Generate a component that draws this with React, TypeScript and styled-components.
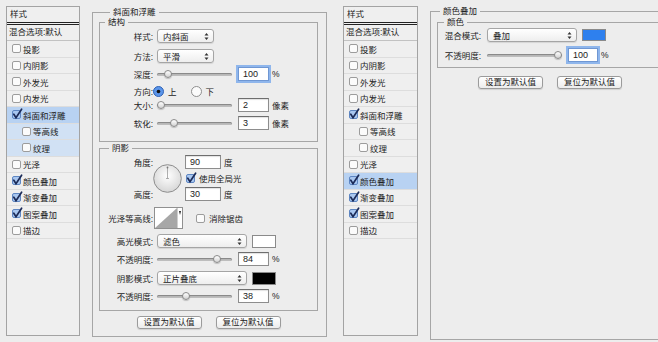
import styled, { createGlobalStyle } from 'styled-components';

const GlobalStyle = createGlobalStyle`
  html, body {
    margin: 0;
    padding: 0;
    background: #ededed;
  }
  body {
    font-family: "Liberation Sans", "Noto Sans CJK SC", sans-serif;
    font-size: 8.5px;
    color: #222;
  }
  * {
    box-sizing: border-box;
  }
`;

const Page = styled.div`
  display: flex;
  align-items: flex-start;
  width: 658px;
  height: 342px;
  padding: 6px 0 0 6px;
  overflow: hidden;
  background: #ededed;
`;

/* ---------- style list ---------- */

const ListPanel = styled.div<{ $ml?: number; $w: number }>`
  flex: none;
  width: ${p => p.$w}px;
  height: 330px;
  margin-left: ${p => p.$ml ?? 0}px;
  border: 1px solid #a3a3a3;
  background: #efefef;
`;

const ListHeader = styled.div`
  height: 18px;
  line-height: 15px;
  padding-left: 3px;
  border-bottom: 3px double #222;
`;

const BlendRow = styled.div`
  height: 16px;
  line-height: 15px;
  padding-left: 2px;
  border-bottom: 1px solid #c2c2c2;
  white-space: nowrap;
`;

const Item = styled.div<{ $bg?: string; $indent?: number }>`
  display: flex;
  align-items: center;
  gap: 2px;
  height: 16.5px;
  padding-left: ${p => 5 + (p.$indent ?? 0)}px;
  border-bottom: 1px solid #dddddd;
  background: ${p => p.$bg ?? 'transparent'};
  white-space: nowrap;
`;

/* ---------- group boxes ---------- */

const Column = styled.div<{ $ml: number }>`
  display: flex;
  flex: none;
  margin-left: ${p => p.$ml}px;
`;

const Group = styled.fieldset<{ $w?: number; $mt?: number; $pad?: string }>`
  flex: none;
  min-width: 0;
  width: ${p => (p.$w ? `${p.$w}px` : 'auto')};
  margin: ${p => p.$mt ?? 0}px 0 0 0;
  padding: ${p => p.$pad ?? '0'};
  border: 1px solid #a6a6a6;
`;

const Legend = styled.legend<{ $ml: number }>`
  margin-left: ${p => p.$ml}px;
  padding: 0 3px;
  height: 10px;
  line-height: 10px;
  font-size: 8.5px;
`;

const Row = styled.div<{ $mt?: number; $h?: number }>`
  display: flex;
  align-items: center;
  height: ${p => p.$h ?? 14}px;
  margin-top: ${p => p.$mt ?? 0}px;
  white-space: nowrap;
`;

const Label = styled.span<{ $w?: number; $gap?: number }>`
  flex: none;
  width: ${p => p.$w ?? 53}px;
  margin-right: ${p => p.$gap ?? 4}px;
  text-align: right;
  white-space: nowrap;
`;

const Select = styled.div<{ $w: number }>`
  display: flex;
  align-items: center;
  justify-content: space-between;
  width: ${p => p.$w}px;
  height: 14px;
  padding: 0 4px 0 5px;
  border: 1px solid #a5a5a5;
  border-radius: 3px;
  background: linear-gradient(#ffffff, #eeeeee);
  box-shadow: 0 1px 1px rgba(0, 0, 0, 0.1);
`;

const NumBox = styled.div<{ $w?: number; $focus?: boolean }>`
  flex: none;
  width: ${p => p.$w ?? 31}px;
  height: 14px;
  padding-left: 4px;
  line-height: 12px;
  font-size: 9px;
  background: #fff;
  border: 1px solid ${p => (p.$focus ? '#6f97d3' : '#8d8d8d')};
  border-top-color: ${p => (p.$focus ? '#6f97d3' : '#6e6e6e')};
  box-shadow: ${p => (p.$focus ? '0 0 0 2px #8fb6ec' : 'inset 0 1px 1px rgba(0,0,0,0.12)')};
`;

const Unit = styled.span`
  margin-left: 3px;
`;

const Track = styled.div<{ $w?: number }>`
  position: relative;
  flex: none;
  width: ${p => p.$w ?? 75}px;
  height: 14px;
  margin-right: 6px;

  &::before {
    content: '';
    position: absolute;
    left: 0;
    right: 0;
    top: 6px;
    height: 3px;
    border-radius: 2px;
    background: #bdbdbd;
    box-shadow: inset 0 1px 1px rgba(0, 0, 0, 0.3);
  }
`;

const Thumb = styled.div`
  position: absolute;
  top: 3px;
  width: 8px;
  height: 8px;
  border-radius: 50%;
  border: 1px solid #8b8b8b;
  background: linear-gradient(#ffffff, #d2d2d2);
  box-shadow: 0 1px 1px rgba(0, 0, 0, 0.2);
`;

const Swatch = styled.div<{ $color: string; $h?: number }>`
  flex: none;
  width: 24px;
  height: ${p => p.$h ?? 13}px;
  margin-left: 5px;
  background: ${p => p.$color};
  border: 1px solid #8a8a8a;
`;

const AngleBlock = styled.div`
  display: grid;
  grid-template-columns: 53px 32px auto;
  grid-template-rows: 14px 18px 14px;
  align-items: center;
  margin-top: 2px;
  white-space: nowrap;
`;

const AngleLabel = styled(Label)<{ $row: number }>`
  grid-column: 1;
  grid-row: ${p => p.$row};
  margin-right: 0;
`;

const DialCell = styled.div`
  grid-column: 2;
  grid-row: 1 / 4;
  align-self: center;
  display: flex;
`;

const Cell = styled.div<{ $row: number }>`
  grid-column: 3;
  grid-row: ${p => p.$row};
  display: flex;
  align-items: center;
`;

const CheckText = styled.span<{ $ml?: number }>`
  display: flex;
  align-items: center;
  gap: 4px;
  margin-left: ${p => p.$ml ?? 0}px;
`;

const ContourWrap = styled.div`
  display: flex;
  margin-left: -3px;
`;

const RadioGroup = styled.div`
  display: flex;
  align-items: center;
  margin-left: -4px;
`;

const RadioOpt = styled.span<{ $ml?: number }>`
  display: flex;
  align-items: center;
  gap: 4px;
  margin-left: ${p => p.$ml ?? 0}px;
`;

const ButtonBar = styled.div<{ $mt: number }>`
  display: flex;
  justify-content: center;
  gap: 14px;
  margin-top: ${p => p.$mt}px;
`;

const Button = styled.div`
  width: 65px;
  height: 13px;
  line-height: 11px;
  text-align: center;
  border: 1px solid #9b9b9b;
  border-radius: 3px;
  background: linear-gradient(#ffffff, #ececec);
  box-shadow: 0 1px 1px rgba(0, 0, 0, 0.12);
`;

/* ---------- drawn bits ---------- */

const CheckBox = ({ on }: { on?: boolean }) => (
  <svg width="9" height="9" viewBox="0 0 9 9" style={{ overflow: 'visible', flex: 'none' }}>
    <rect
      x="0.5"
      y="0.5"
      width="8"
      height="8"
      rx="1.5"
      fill={on ? '#a9c7f0' : '#fbfbfb'}
      stroke={on ? '#5e86c2' : '#9c9c9c'}
    />
    {on && (
      <path d="M1.8 4.2 L4 7.6 L9.6 -0.8" fill="none" stroke="#1c2b58" strokeWidth="1.7" strokeLinecap="round" />
    )}
  </svg>
);

const Radio = ({ on }: { on?: boolean }) => (
  <svg width="11" height="11" viewBox="0 0 11 11" style={{ flex: 'none' }}>
    <circle cx="5.5" cy="5.5" r="5" fill={on ? '#5b95ea' : '#fbfbfb'} stroke={on ? '#2f62b4' : '#8e8e8e'} />
    {on && <circle cx="5.5" cy="5.5" r="1.8" fill="#111" />}
  </svg>
);

const Arrows = () => (
  <svg width="5" height="9" viewBox="0 0 5 9">
    <path d="M0.5 3.6 L2.5 1 L4.5 3.6 Z M0.5 5.4 L2.5 8 L4.5 5.4 Z" fill="#333" />
  </svg>
);

const Dial = () => (
  <svg width="29" height="29" viewBox="0 0 29 29">
    <defs>
      <radialGradient id="dialFill" cx="50%" cy="40%" r="60%">
        <stop offset="0%" stopColor="#ffffff" />
        <stop offset="100%" stopColor="#d6d6d6" />
      </radialGradient>
    </defs>
    <circle cx="14.5" cy="14.5" r="13.8" fill="url(#dialFill)" stroke="#8e8e8e" />
    <line x1="14.5" y1="14.5" x2="14.5" y2="3" stroke="#9a9a9a" strokeWidth="0.8" />
    <line x1="13" y1="14.5" x2="16" y2="14.5" stroke="#9a9a9a" strokeWidth="0.8" />
    <circle cx="14.5" cy="3.5" r="0.9" fill="#777" />
  </svg>
);

const Contour = () => (
  <svg width="29" height="22" viewBox="0 0 29 22">
    <rect x="0.5" y="0.5" width="28" height="21" fill="#fff" stroke="#909090" />
    <polygon points="1,21 23,1 23,21" fill="#a7a7a7" />
    <line x1="23.5" y1="1" x2="23.5" y2="21" stroke="#cfcfcf" />
    <path d="M25 4 L27 4 L26 8 Z" fill="#222" />
  </svg>
);

const Slider = ({ pct }: { pct: number }) => (
  <Track>
    <Thumb style={{ left: `${Math.round((pct / 100) * 67)}px` }} />
  </Track>
);

/* ---------- data ---------- */

type Layer = { name: string; checked?: boolean; sub?: boolean; key: string };

const layers: Layer[] = [
  { key: 'drop', name: '投影' },
  { key: 'inner', name: '内阴影' },
  { key: 'outer', name: '外发光' },
  { key: 'innerGlow', name: '内发光' },
  { key: 'bevel', name: '斜面和浮雕', checked: true },
  { key: 'contour', name: '等高线', sub: true },
  { key: 'texture', name: '纹理', sub: true },
  { key: 'satin', name: '光泽' },
  { key: 'color', name: '颜色叠加', checked: true },
  { key: 'gradient', name: '渐变叠加', checked: true },
  { key: 'pattern', name: '图案叠加', checked: true },
  { key: 'stroke', name: '描边' },
];

const StyleList = ({ active, w, ml }: { active: string; w: number; ml?: number }) => (
  <ListPanel $w={w} $ml={ml}>
    <ListHeader>样式</ListHeader>
    <BlendRow>混合选项:默认</BlendRow>
    {layers.map(l => {
      let bg: string | undefined;
      if (l.key === active) bg = '#b8d2f2';
      else if (active === 'bevel' && l.sub) bg = '#d1e1f4';
      return (
        <Item key={l.key} $bg={bg} $indent={l.sub ? 10 : 0}>
          <CheckBox on={l.checked} />
          <span>{l.name}</span>
        </Item>
      );
    })}
  </ListPanel>
);

const BevelPanel = () => (
  <Group $w={235} $mt={1} $pad="0 8px 7px 6px">
    <Legend $ml={11}>斜面和浮雕</Legend>
    <Group $pad="2px 0 11px 0">
      <Legend $ml={5}>结构</Legend>
      <Row>
        <Label>样式:</Label>
        <Select $w={57}>
          <span>内斜面</span>
          <Arrows />
        </Select>
      </Row>
      <Row $mt={6}>
        <Label>方法:</Label>
        <Select $w={57}>
          <span>平滑</span>
          <Arrows />
        </Select>
      </Row>
      <Row $mt={4}>
        <Label>深度:</Label>
        <Slider pct={10} />
        <NumBox $focus>100</NumBox>
        <Unit>%</Unit>
      </Row>
      <Row $mt={3}>
        <Label>方向:</Label>
        <RadioGroup>
          <RadioOpt>
            <Radio on />
            上
          </RadioOpt>
          <RadioOpt $ml={14}>
            <Radio />
            下
          </RadioOpt>
        </RadioGroup>
      </Row>
      <Row>
        <Label>大小:</Label>
        <Slider pct={0} />
        <NumBox>2</NumBox>
        <Unit>像素</Unit>
      </Row>
      <Row $mt={4}>
        <Label>软化:</Label>
        <Slider pct={19} />
        <NumBox>3</NumBox>
        <Unit>像素</Unit>
      </Row>
    </Group>

    <Group $mt={1} $pad="0 0 7px 0">
      <Legend $ml={9}>阴影</Legend>
      <AngleBlock>
        <AngleLabel $row={1}>角度:</AngleLabel>
        <DialCell>
          <Dial />
        </DialCell>
        <Cell $row={1}>
          <NumBox $w={36}>90</NumBox>
          <Unit>度</Unit>
        </Cell>
        <Cell $row={2}>
          <CheckText $ml={1}>
            <CheckBox on />
            使用全局光
          </CheckText>
        </Cell>
        <AngleLabel $row={3}>高度:</AngleLabel>
        <Cell $row={3}>
          <NumBox $w={36}>30</NumBox>
          <Unit>度</Unit>
        </Cell>
      </AngleBlock>
      <Row $mt={6} $h={22}>
        <Label>光泽等高线:</Label>
        <ContourWrap>
          <Contour />
        </ContourWrap>
        <CheckText $ml={13}>
          <CheckBox />
          消除锯齿
        </CheckText>
      </Row>
      <Row $mt={5}>
        <Label>高光模式:</Label>
        <Select $w={90}>
          <span>滤色</span>
          <Arrows />
        </Select>
        <Swatch $color="#ffffff" />
      </Row>
      <Row $mt={4}>
        <Label>不透明度:</Label>
        <Slider pct={84} />
        <NumBox>84</NumBox>
        <Unit>%</Unit>
      </Row>
      <Row $mt={5}>
        <Label>阴影模式:</Label>
        <Select $w={90}>
          <span>正片叠底</span>
          <Arrows />
        </Select>
        <Swatch $color="#000000" />
      </Row>
      <Row $mt={4}>
        <Label>不透明度:</Label>
        <Slider pct={38} />
        <NumBox>38</NumBox>
        <Unit>%</Unit>
      </Row>
    </Group>

    <ButtonBar $mt={5}>
      <Button>设置为默认值</Button>
      <Button>复位为默认值</Button>
    </ButtonBar>
  </Group>
);

const ColorPanel = () => (
  <Group $w={234} $pad="0 0 250px 6px">
    <Legend $ml={3}>颜色叠加</Legend>
    <Group $mt={1} $pad="1px 0 5px 0">
      <Legend $ml={6}>颜色</Legend>
      <Row>
        <Label $w={43} $gap={6}>混合模式:</Label>
        <Select $w={90}>
          <span>叠加</span>
          <Arrows />
        </Select>
        <Swatch $color="#2e80ee" $h={12} />
      </Row>
      <Row $mt={6}>
        <Label $w={43} $gap={6}>不透明度:</Label>
        <Slider pct={100} />
        <NumBox $w={30} $focus>100</NumBox>
        <Unit>%</Unit>
      </Row>
    </Group>
    <ButtonBar $mt={8}>
      <Button>设置为默认值</Button>
      <Button>复位为默认值</Button>
    </ButtonBar>
  </Group>
);

export default function App() {
  return (
    <>
      <GlobalStyle />
      <Page>
        <StyleList active="bevel" w={74} />
        <Column $ml={12}>
          <BevelPanel />
        </Column>
        <StyleList active="color" w={75} ml={16} />
        <Column $ml={12}>
          <ColorPanel />
        </Column>
      </Page>
    </>
  );
}
